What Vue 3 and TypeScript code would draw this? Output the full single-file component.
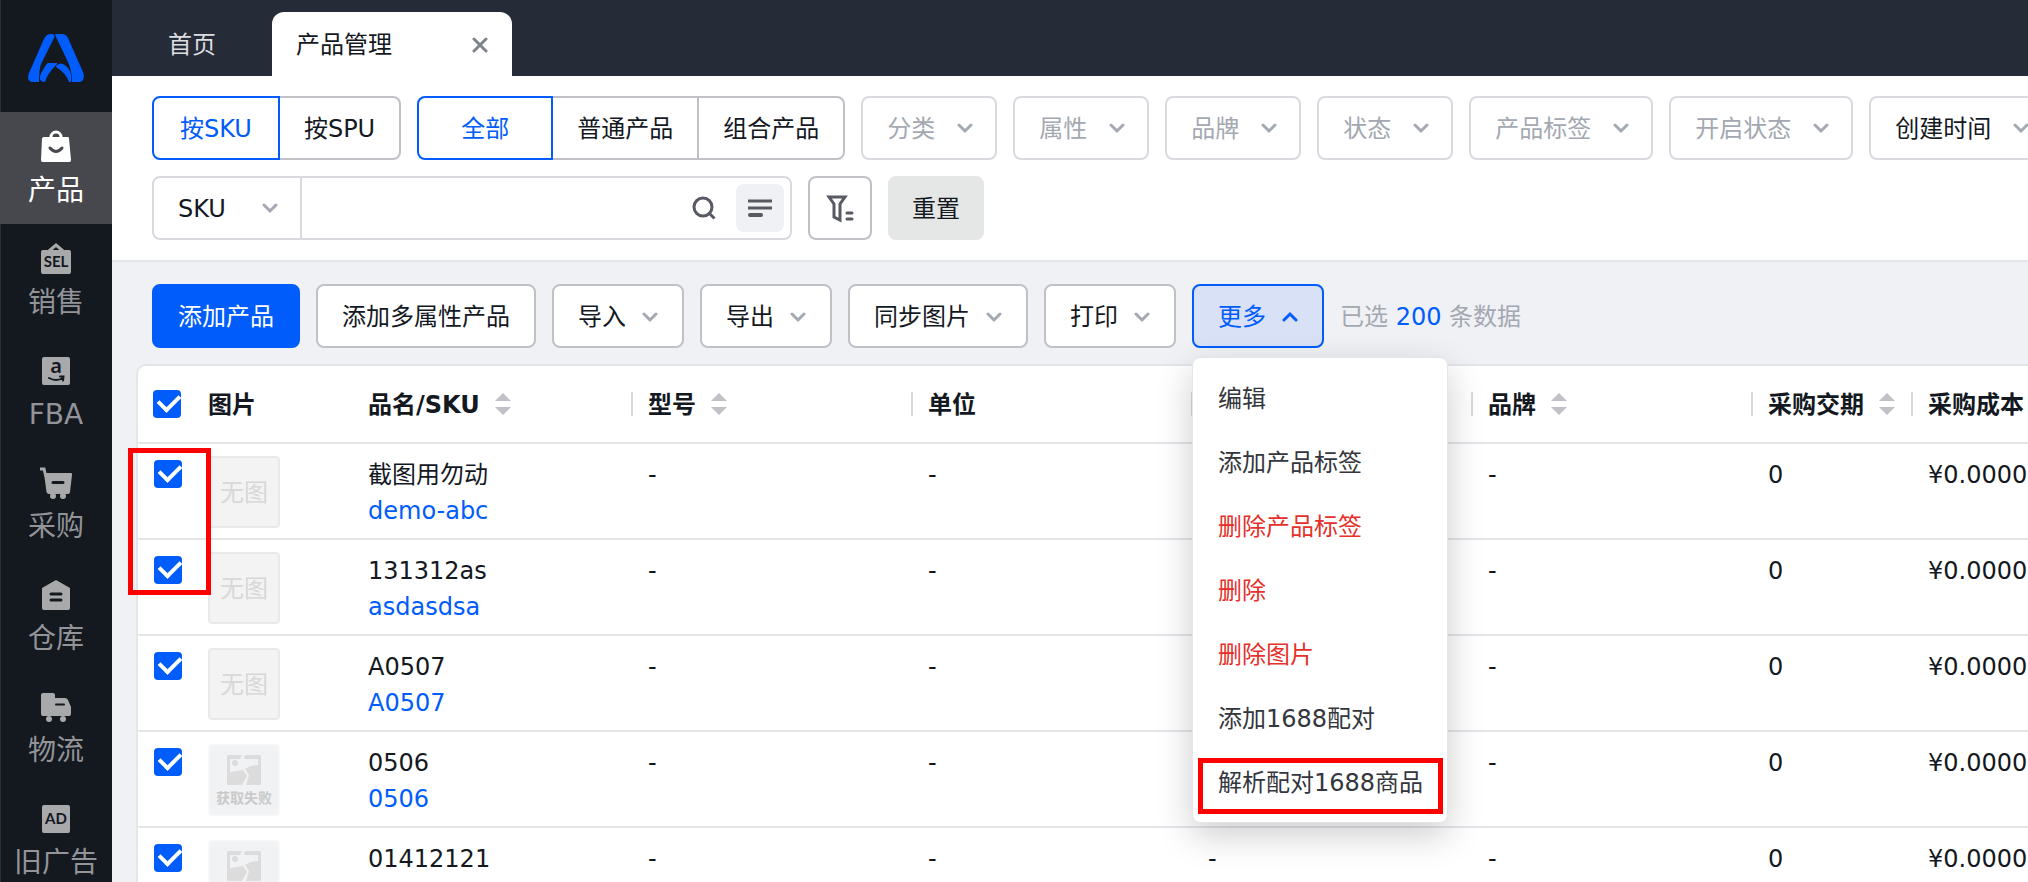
<script setup lang="ts">
import { ref } from 'vue'

interface NavItem { key: string; label: string }
interface Row { id: number; name: string; sku: string; image: 'none' | 'failed'; checked: boolean }
interface Column { key: string; label: string; sortable: boolean; divided: boolean }

const navItems: NavItem[] = [
  { key: 'product', label: '产品' },
  { key: 'sales', label: '销售' },
  { key: 'fba', label: 'FBA' },
  { key: 'purchase', label: '采购' },
  { key: 'warehouse', label: '仓库' },
  { key: 'logistics', label: '物流' },
  { key: 'ads', label: '旧广告' },
]
const activeNav = ref('product')

const viewMode = ref('按SKU')
const viewModes = ['按SKU', '按SPU']
const productType = ref('全部')
const productTypes = ['全部', '普通产品', '组合产品']

const filters = ['分类', '属性', '品牌', '状态', '产品标签', '开启状态']
const keyword = ref('')

const toolMenus = ['导入', '导出', '同步图片', '打印']
const menuOpen = ref(true)
const menuItems = [
  { label: '编辑', danger: false, marked: false },
  { label: '添加产品标签', danger: false, marked: false },
  { label: '删除产品标签', danger: true, marked: false },
  { label: '删除', danger: true, marked: false },
  { label: '删除图片', danger: true, marked: false },
  { label: '添加1688配对', danger: false, marked: false },
  { label: '解析配对1688商品', danger: false, marked: true },
]

const columns: Column[] = [
  { key: 'image', label: '图片', sortable: false, divided: false },
  { key: 'name', label: '品名/SKU', sortable: true, divided: false },
  { key: 'model', label: '型号', sortable: true, divided: true },
  { key: 'unit', label: '单位', sortable: false, divided: true },
  { key: 'spec', label: '', sortable: false, divided: true },
  { key: 'brand', label: '品牌', sortable: true, divided: true },
  { key: 'lead', label: '采购交期', sortable: true, divided: true },
  { key: 'cost', label: '采购成本', sortable: true, divided: true },
]

const allChecked = ref(true)
const rows = ref<Row[]>([
  { id: 1, name: '截图用勿动', sku: 'demo-abc', image: 'none', checked: true },
  { id: 2, name: '131312as', sku: 'asdasdsa', image: 'none', checked: true },
  { id: 3, name: 'A0507', sku: 'A0507', image: 'none', checked: true },
  { id: 4, name: '0506', sku: '0506', image: 'failed', checked: true },
  { id: 5, name: '01412121', sku: '', image: 'failed', checked: true },
])
</script>

<template>
  <div class="shell">
    <aside class="sidebar">
      <a href="#" class="brand" aria-label="首页">
        <svg class="logo" viewBox="0 0 56 48">
          <path d="M22 0H23Q28 0 26 4L13 30Q11 36 11 48H5Q-2 48 1 39L15 7Q18 0 22 0Z" />
          <path d="M27 0H34Q38 0 40 4L55 38Q58 48 50 48H44Q44 37 40 28L28 3Z" />
          <path d="M29 29H20Q18 30 15 36Q11 42 12 45Q13 48 17 48Q19 40 29 30Z" />
          <path d="M28 32Q33 27 38 32Q45 38 43 48H41Q38 39 28 33Z" />
        </svg>
      </a>
      <nav>
        <a
          v-for="item in navItems"
          :key="item.key"
          href="#"
          class="nav-item"
          :class="{ active: item.key === activeNav }"
          @click.prevent="activeNav = item.key"
        >
          <svg class="nav-icon" viewBox="0 0 32 32" aria-hidden="true">
            <g v-if="item.key === 'product'">
              <path class="stroke" d="M11 8V6a5 5 0 0 1 10 0v2" />
              <path class="fill" d="M4 6H28Q29 6 29 7.500L31 29Q31 31 29.500 31H2.500Q1 31 1 29L2 7.500Q2 6 4 6Z" />
              <path class="cut" d="M10 17Q16 24 22 17" />
            </g>
            <g v-else-if="item.key === 'sales'">
              <path class="stroke" d="M9 8L16 2L23 8" />
              <rect class="fill" x="1" y="7" width="30" height="24" rx="2" />
              <text class="badge sel" x="16" y="24" text-anchor="middle">SEL</text>
            </g>
            <g v-else-if="item.key === 'fba'">
              <rect class="fill" x="2" y="2" width="28" height="28" rx="2" />
              <text class="badge amazon" x="16" y="18" text-anchor="middle">a</text>
              <path class="cut thin" d="M9 23Q16 27 23 23M20 21.500L23.500 21.500L23 25.500" />
            </g>
            <g v-else-if="item.key === 'purchase'">
              <path class="stroke" d="M0 2H4L6 10" />
              <path class="fill" d="M4 6H31Q32.500 6 32 8L30 25Q30 27 28 27H9Q7 27 6.500 25Z" />
              <circle class="fill" cx="13" cy="29" r="3" />
              <circle class="fill" cx="23" cy="29" r="3" />
              <path class="cut" d="M13 15.500H23" />
            </g>
            <g v-else-if="item.key === 'warehouse'">
              <path class="fill" d="M16 1L30 9V29Q30 31 28 31H4Q2 31 2 29V9Z" />
              <path class="cut" d="M11 15H21M11 21H21" />
            </g>
            <g v-else-if="item.key === 'logistics'">
              <path class="fill" d="M3 2H13Q15 2 15 4V7H25Q27 7 28 9L31 16V23Q31 25 29 25H3Q1 25 1 23V4Q1 2 3 2Z" />
              <circle class="fill" cx="9" cy="28" r="3" />
              <circle class="fill" cx="23" cy="28" r="3" />
              <path class="cut thin" d="M16 13.500H24" />
            </g>
            <g v-else>
              <rect class="fill" x="2" y="2" width="28" height="28" rx="2" />
              <text class="badge ad" x="16" y="21" text-anchor="middle">AD</text>
            </g>
          </svg>
          <span>{{ item.label }}</span>
        </a>
      </nav>
    </aside>

    <div class="main">
      <header class="tabs">
        <a href="#" class="tab">首页</a>
        <div class="tab current">
          <span>产品管理</span>
          <button type="button" class="close" aria-label="关闭">
            <svg viewBox="0 0 16 16"><path d="M2 2L14 14M14 2L2 14" /></svg>
          </button>
        </div>
      </header>

      <section class="filters">
        <div class="line">
          <div class="segment">
            <button
              v-for="mode in viewModes"
              :key="mode"
              type="button"
              :class="{ on: mode === viewMode }"
              @click="viewMode = mode"
            >{{ mode }}</button>
          </div>
          <div class="segment wide">
            <button
              v-for="kind in productTypes"
              :key="kind"
              type="button"
              :class="{ on: kind === productType }"
              @click="productType = kind"
            >{{ kind }}</button>
          </div>
          <div v-for="f in filters" :key="f" class="picker">
            <select :aria-label="f"><option>{{ f }}</option></select>
            <svg class="chevron" viewBox="0 0 16 16"><path d="M2 5L8 11L14 5" /></svg>
          </div>
          <div class="picker dark">
            <select aria-label="时间类型"><option>创建时间</option></select>
            <svg class="chevron" viewBox="0 0 16 16"><path d="M2 5L8 11L14 5" /></svg>
          </div>
        </div>
        <div class="line">
          <div class="search">
            <div class="picker dark field">
              <select aria-label="搜索字段"><option>SKU</option></select>
              <svg class="chevron" viewBox="0 0 16 16"><path d="M2 5L8 11L14 5" /></svg>
            </div>
            <input v-model="keyword" type="text" aria-label="搜索内容" />
            <button type="button" class="find" aria-label="搜索">
              <svg viewBox="0 0 24 24"><circle cx="11" cy="11" r="9" /><path d="M17.500 17.500L22.500 22.500" /></svg>
            </button>
            <button type="button" class="batch" aria-label="批量搜索">
              <svg viewBox="0 0 24 24"><path d="M0 5H24M0 12H24" /><path class="round" d="M2 19H13" /></svg>
            </button>
          </div>
          <button type="button" class="btn icon-btn" aria-label="筛选">
            <svg viewBox="0 0 26 26"><path d="M2 2H18L13 9V25L7 22V9Z" /><path class="round" d="M20 18H25M20 24H25" /></svg>
          </button>
          <button type="button" class="btn reset">重置</button>
        </div>
      </section>

      <section class="toolbar">
        <button type="button" class="btn primary">添加产品</button>
        <button type="button" class="btn">添加多属性产品</button>
        <button v-for="t in toolMenus" :key="t" type="button" class="btn" aria-haspopup="menu">
          {{ t }}
          <svg class="chevron" viewBox="0 0 16 16"><path d="M2 5L8 11L14 5" /></svg>
        </button>
        <div class="more">
          <button type="button" class="btn open" aria-haspopup="menu" :aria-expanded="menuOpen" @click="menuOpen = !menuOpen">
            更多
            <svg class="chevron" viewBox="0 0 16 16"><path d="M2 11L8 5L14 11" /></svg>
          </button>
          <ul v-if="menuOpen" class="menu" role="menu">
            <li v-for="m in menuItems" :key="m.label" :class="{ marked: m.marked }" role="none">
              <button type="button" role="menuitem" :class="{ danger: m.danger }">{{ m.label }}</button>
            </li>
          </ul>
        </div>
        <p class="picked">已选 <b>200</b> 条数据</p>
      </section>

      <section class="list">
        <div class="mark"></div>
        <table>
          <colgroup>
            <col class="c-check" />
            <col v-for="c in columns" :key="c.key" :class="'c-' + c.key" />
          </colgroup>
          <thead>
            <tr>
              <th class="check"><input v-model="allChecked" type="checkbox" aria-label="全选" /></th>
              <th v-for="c in columns" :key="c.key" :class="{ divided: c.divided }">
                <div class="head">
                  <span>{{ c.label }}</span>
                  <svg v-if="c.sortable" class="sort" viewBox="0 0 16 24"><path d="M8 1L16 9H0ZM8 23L16 15H0Z" /></svg>
                </div>
              </th>
            </tr>
          </thead>
          <tbody>
            <tr v-for="row in rows" :key="row.id">
              <td class="check"><input v-model="row.checked" type="checkbox" :aria-label="'选择 ' + row.name" /></td>
              <td class="pic">
                <div v-if="row.image === 'none'" class="thumb">无图</div>
                <div v-else class="thumb failed">
                  <svg viewBox="0 0 34 30">
                    <path class="frame" d="M1 0H15L13 4H3V17Q10 16 16 15L20 21L15 30H1Q0 30 0 29V1Q0 0 1 0Z" />
                    <path class="frame" d="M18 0H33Q34 0 34 1V29Q34 30 33 30H19L22 20L18 14Q24 10 31 10V4H17Z" />
                    <circle class="frame" cx="8" cy="8" r="3" />
                  </svg>
                  <span>获取失败</span>
                </div>
              </td>
              <td>
                <div>{{ row.name }}</div>
                <a v-if="row.sku" href="#">{{ row.sku }}</a>
              </td>
              <td>-</td>
              <td>-</td>
              <td>-</td>
              <td>-</td>
              <td>0</td>
              <td>¥0.0000</td>
            </tr>
          </tbody>
        </table>
      </section>
    </div>
  </div>
</template>

<style>
body {
  margin: 0;
}
</style>

<style scoped>
* {
  box-sizing: border-box;
}
.shell {
  display: flex;
  height: 100vh;
  overflow: hidden;
  background: #f0f1f5;
  color: #14181f;
  font-family: "DejaVu Sans", "Noto Sans CJK SC", sans-serif;
  font-size: 24px;
  line-height: 36px;
}
button,
select,
input {
  font: inherit;
  color: inherit;
  margin: 0;
}
button {
  cursor: pointer;
  white-space: nowrap;
}
a {
  text-decoration: none;
}
svg {
  display: block;
  fill: none;
  flex: none;
}

/* Sidebar */
.sidebar {
  flex: none;
  width: 112px;
  background: #14181f;
  box-shadow: inset 1px 0 #2b2f36;
}
.brand {
  display: flex;
  align-items: center;
  justify-content: center;
  height: 112px;
  padding-top: 4px;
}
.logo {
  width: 56px;
  height: 48px;
  fill: #005cfa;
}
.nav-item {
  --ink: #a8a9ab;
  --back: #14181f;
  display: flex;
  flex-direction: column;
  align-items: center;
  gap: 8px;
  height: 112px;
  padding-top: 19px;
  color: #929498;
  font-size: 28px;
  line-height: 40px;
  white-space: nowrap;
}
.nav-item.active {
  --ink: #ffffff;
  --back: #46484d;
  background: #46484d;
  color: #ffffff;
}
.nav-icon {
  width: 32px;
  height: 32px;
  overflow: visible;
}
.nav-icon .fill {
  fill: var(--ink);
}
.nav-icon .stroke {
  stroke: var(--ink);
  stroke-width: 3;
}
.nav-icon .cut {
  stroke: var(--back);
  stroke-width: 3;
  stroke-linecap: round;
}
.nav-icon .thin {
  stroke-width: 2;
}
.badge {
  fill: var(--back);
  font-weight: 700;
  font-family: Lato, sans-serif;
}
.sel,
.ad {
  font-size: 15px;
}
.amazon {
  font-family: "Noto Sans", sans-serif;
  font-size: 20px;
  font-weight: 600;
}

/* Tabs */
.main {
  flex: 1;
  min-width: 0;
  display: flex;
  flex-direction: column;
}
.tabs {
  flex: none;
  display: flex;
  align-items: flex-end;
  height: 76px;
  background: #252b37;
}
.tab {
  display: flex;
  align-items: center;
  justify-content: space-between;
  height: 64px;
  padding: 2px 56px 0;
  color: #dcdde0;
}
.tab.current {
  width: 240px;
  padding: 2px 24px 0;
  border-radius: 12px 12px 0 0;
  background: #ffffff;
  color: #14181f;
}
.close {
  padding: 0;
  border: 0;
  background: none;
}
.close svg {
  width: 16px;
  height: 16px;
  stroke: #7f838b;
  stroke-width: 3;
  stroke-linecap: round;
}

/* Filters */
.filters {
  flex: none;
  display: flex;
  flex-direction: column;
  gap: 16px;
  padding: 20px 0 20px 40px;
  background: #ffffff;
  border-bottom: 2px solid #e4e5e9;
}
.line {
  display: flex;
  gap: 16px;
}
.segment {
  display: flex;
  flex: none;
}
.segment button {
  height: 64px;
  padding: 2px 26px 0;
  border: 2px solid #bfc1c6;
  background: #ffffff;
}
.segment button + button {
  border-left: 0;
  padding: 2px 24px 0;
}
.segment button:first-child {
  border-radius: 8px 0 0 8px;
}
.segment button:last-child {
  border-radius: 0 8px 8px 0;
}
.segment.wide button:first-child {
  padding: 2px 42px 0;
}
.segment button.on {
  border-color: #005cfa;
  color: #005cfa;
}
.picker {
  display: grid;
  flex: none;
  align-items: center;
  color: #a3a8b1;
}
.picker.dark {
  color: #14181f;
}
.picker > * {
  grid-area: 1 / 1;
}
.picker select {
  appearance: none;
  height: 64px;
  padding: 2px 60px 0 24px;
  border: 2px solid #d9dae0;
  border-radius: 8px;
  background: #ffffff;
}
.picker .chevron {
  justify-self: end;
  margin-right: 24px;
  pointer-events: none;
}
.chevron {
  width: 16px;
  height: 16px;
  stroke: #a3a8b1;
  stroke-width: 3;
  stroke-linecap: round;
}
.search {
  display: flex;
  align-items: center;
  width: 640px;
  height: 64px;
  padding-right: 6px;
  border: 2px solid #d9dae0;
  border-radius: 8px;
}
.field {
  width: 148px;
  border-right: 2px solid #d9dae0;
}
.field select {
  width: 100%;
  height: 60px;
  border: 0;
}
.field .chevron {
  margin-right: 22px;
}
.search input {
  flex: 1;
  min-width: 0;
  height: 60px;
  padding: 0 16px;
  border: 0;
  background: none;
  outline: 0;
}
.find,
.batch {
  display: flex;
  align-items: center;
  justify-content: center;
  width: 48px;
  height: 48px;
  padding: 0;
  border: 0;
  border-radius: 8px;
  background: none;
}
.find {
  margin-right: 8px;
}
.batch {
  background: #f0f1f5;
}
.find svg,
.batch svg {
  width: 24px;
  height: 24px;
  stroke: #575a62;
  stroke-width: 3;
}
.batch .round {
  stroke-width: 4;
}
.round {
  stroke-linecap: round;
}
.btn {
  display: flex;
  flex: none;
  align-items: center;
  gap: 16px;
  height: 64px;
  padding: 2px 24px 0;
  border: 2px solid #bfc1c6;
  border-radius: 8px;
  background: #ffffff;
}
.icon-btn {
  justify-content: center;
  width: 64px;
  padding: 0;
}
.icon-btn svg {
  width: 26px;
  height: 26px;
  overflow: visible;
  stroke: #575a62;
  stroke-width: 3;
}
.reset {
  padding: 2px 22px 0;
  border-color: #e5e7e6;
  background: #e5e7e6;
}

/* Toolbar */
.toolbar {
  flex: none;
  display: flex;
  align-items: center;
  gap: 16px;
  padding: 22px 0 16px 40px;
}
.primary {
  border-color: #005cfa;
  background: #005cfa;
  color: #ffffff;
}
.more {
  position: relative;
  flex: none;
}
.open {
  border-color: #005cfa;
  background: #d9e1f7;
  color: #005cfa;
}
.open .chevron {
  stroke: #005cfa;
}
.menu {
  position: absolute;
  z-index: 3;
  top: 100%;
  left: 0;
  min-width: 256px;
  margin: 9px 0 0;
  padding: 8px 0;
  border: 1px solid #e4e5e9;
  border-radius: 8px;
  background: #ffffff;
  box-shadow: 0 12px 36px rgba(0, 0, 0, 0.2);
  list-style: none;
}
.menu button {
  display: block;
  width: 100%;
  height: 64px;
  padding: 2px 24px 0 25px;
  border: 0;
  background: none;
  color: #33363d;
  text-align: left;
}
.menu button.danger {
  color: #e6302b;
}
.menu .marked {
  position: relative;
}
.marked::after {
  content: "";
  position: absolute;
  inset: 8px 4px 0 5px;
  border: 5px solid #ff0000;
  pointer-events: none;
}
.picked {
  margin: 0;
  padding-top: 2px;
  color: #a3a8b1;
  white-space: nowrap;
}
.picked b {
  color: #005cfa;
  font-weight: 400;
}

/* Table */
.list {
  position: relative;
  margin-left: 24px;
  border: 2px solid #e4e5e9;
  border-right: 0;
  border-radius: 10px 0 0 0;
  background: #ffffff;
}
.mark {
  position: absolute;
  z-index: 2;
  top: 82px;
  left: -10px;
  width: 83px;
  height: 147px;
  border: 5px solid #ff0000;
  pointer-events: none;
}
table {
  width: 2000px;
  table-layout: fixed;
  border-collapse: separate;
  border-spacing: 0;
}
.c-check {
  width: 54px;
}
.c-image,
.c-lead {
  width: 160px;
}
.c-name,
.c-model,
.c-unit,
.c-spec,
.c-brand {
  width: 280px;
}
th {
  height: 78px;
  padding: 0 0 0 16px;
  border-bottom: 2px solid #e4e5e9;
  text-align: left;
  font-weight: 700;
}
th.check {
  padding-left: 15px;
}
.head {
  display: flex;
  align-items: center;
  gap: 15px;
}
.head span {
  padding-top: 2px;
}
.divided .head {
  position: relative;
}
.divided .head::before {
  content: "";
  position: absolute;
  left: -17px;
  width: 2px;
  height: 24px;
  background: #d9dae0;
}
.divided .head:has(span:empty) {
  height: 38px;
}
.sort {
  width: 16px;
  height: 24px;
  fill: #bfc1c6;
}
td {
  height: 96px;
  padding: 13px 0 0 16px;
  border-bottom: 2px solid #e4e5e9;
  vertical-align: top;
}
td a {
  color: #005cfa;
}
td.check {
  padding-top: 16px;
}
td.pic {
  padding-top: 12px;
}
.check input {
  display: block;
  appearance: none;
  width: 28px;
  height: 28px;
  border-radius: 4px;
  background: #ffffff;
  border: 2px solid #bfc1c6;
}
.check input:checked {
  border: 0;
  background: #005cfa;
}
.check input:checked::before {
  content: "";
  display: block;
  width: 10px;
  height: 17px;
  margin: 2px 0 0 9px;
  border: solid #ffffff;
  border-width: 0 4px 4px 0;
  transform: translateY(-2px) rotate(45deg);
}
.thumb {
  display: flex;
  flex-direction: column;
  align-items: center;
  justify-content: center;
  width: 72px;
  height: 72px;
  padding-top: 2px;
  border: 2px solid #e9e9e9;
  border-radius: 4px;
  background: #f3f3f3;
  color: #d8d8d8;
}
.failed {
  gap: 4px;
  border-color: #f6f7f8;
  background: #f1f2f4;
  color: #c9c9c9;
  font-size: 14px;
  line-height: 18px;
  font-weight: 700;
}
.failed svg {
  width: 34px;
  height: 30px;
}
.frame {
  fill: #dcdcdc;
}
</style>
